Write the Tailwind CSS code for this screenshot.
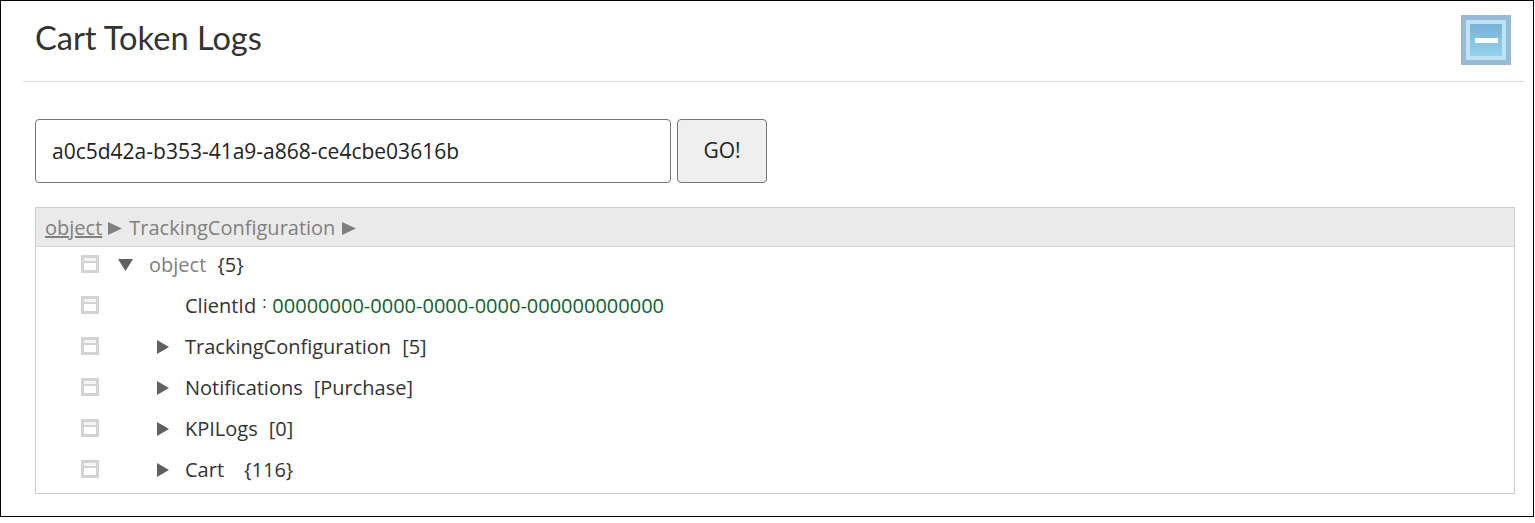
<!DOCTYPE html>
<html lang="en">
<head>
  <meta charset="UTF-8">
  <title>Cart Token Logs</title>
  <script src="https://cdn.jsdelivr.net/npm/@tailwindcss/browser@4"></script>
</head>
<body class="bg-white font-['Open_Sans',sans-serif] text-[#333]">

  <div class="w-[1534px] h-[517px] border border-black pl-[22px] pr-[9px]">

    <!-- Header -->
    <div class="h-[80px] flex items-start justify-between border-b border-[#dcdcdc] box-content">
      <h1 class="ml-[12px] mt-[15px] text-[32.6px] leading-[44px] font-['Lato',sans-serif] text-[#333]">Cart Token Logs</h1>
      <div class="mt-[14px] mr-[13px] w-[50px] h-[50px] border-[5px] border-[#98bad8] bg-[#bfe3f2] p-[4px]">
        <div class="w-full h-full bg-gradient-to-b from-[#78b2d8] to-[#92d3ec] flex items-center justify-center">
          <div class="w-[23px] h-[5px] bg-white"></div>
        </div>
      </div>
    </div>

    <div class="pl-[12px] pr-[9px]">
      <!-- Token search -->
      <div class="flex gap-[6px] mt-[37px]">
        <input type="text" value="a0c5d42a-b353-41a9-a868-ce4cbe03616b"
               class="w-[636px] h-[64px] px-[16px] border border-[#767676] rounded-[4px] text-[21px] text-[#222]">
        <button class="w-[90px] h-[64px] border border-[#767676] rounded-[4px] bg-[#efefef] text-[21px] text-[#222]">GO!</button>
      </div>

      <!-- JSON viewer -->
      <div class="mt-[24px] w-[1480px] h-[287px] border border-[#cccccc] text-[20px]">
        <div class="h-[39px] bg-[#eaeaea] border-b border-[#d4d4d4] flex items-center pl-[9px] pt-[2px] text-[#808080] whitespace-pre">
          <span class="underline">object</span>
          <svg class="ml-[6px] mr-[7px]" width="14" height="13" viewBox="0 0 14 13"><path d="M0 0V13L14 6.5Z" fill="#808080"/></svg>
          <span>TrackingConfiguration</span>
          <svg class="ml-[7px]" width="14" height="13" viewBox="0 0 14 13"><path d="M0 0V13L14 6.5Z" fill="#808080"/></svg>
        </div>

        <div class="h-[38px] pb-[2px] flex items-center pl-[45px]">
          <span class="w-[18px] h-[18px] mb-[2px] border-[3px] border-[#d3d3d3]"><span class="block h-[5px] bg-[#f4f4f4] border-b-2 border-[#d3d3d3]"></span></span>
          <span class="w-[14px] ml-[19px]"><svg width="15" height="12" viewBox="0 0 15 12"><path d="M0 0H15L7.5 12Z" fill="#606060"/></svg></span>
          <span class="ml-[17px] text-[#808080]">object</span>
          <span class="ml-[11px]">{5}</span>
        </div>

        <div class="h-[41px] flex items-center pl-[45px]">
          <span class="w-[18px] h-[18px] mb-[2px] border-[3px] border-[#d3d3d3]"><span class="block h-[5px] bg-[#f4f4f4] border-b-2 border-[#d3d3d3]"></span></span>
          <span class="ml-[86px]">ClientId</span>
          <span class="ml-[6px] mb-[8px] text-[16px]">:</span>
          <span class="ml-[6px] text-[#0f5f2f]">00000000-0000-0000-0000-000000000000</span>
        </div>

        <div class="h-[41px] flex items-center pl-[45px]">
          <span class="w-[18px] h-[18px] mb-[2px] border-[3px] border-[#d3d3d3]"><span class="block h-[5px] bg-[#f4f4f4] border-b-2 border-[#d3d3d3]"></span></span>
          <svg class="ml-[58px]" width="12" height="14" viewBox="0 0 12 14"><path d="M0 0V14L12 7Z" fill="#606060"/></svg>
          <span class="ml-[16px]">TrackingConfiguration</span>
          <span class="ml-[11px]">[5]</span>
        </div>

        <div class="h-[41px] flex items-center pl-[45px]">
          <span class="w-[18px] h-[18px] mb-[2px] border-[3px] border-[#d3d3d3]"><span class="block h-[5px] bg-[#f4f4f4] border-b-2 border-[#d3d3d3]"></span></span>
          <svg class="ml-[58px]" width="12" height="14" viewBox="0 0 12 14"><path d="M0 0V14L12 7Z" fill="#606060"/></svg>
          <span class="ml-[16px]">Notifications</span>
          <span class="ml-[11px]">[Purchase]</span>
        </div>

        <div class="h-[41px] flex items-center pl-[45px]">
          <span class="w-[18px] h-[18px] mb-[2px] border-[3px] border-[#d3d3d3]"><span class="block h-[5px] bg-[#f4f4f4] border-b-2 border-[#d3d3d3]"></span></span>
          <svg class="ml-[58px]" width="12" height="14" viewBox="0 0 12 14"><path d="M0 0V14L12 7Z" fill="#606060"/></svg>
          <span class="ml-[16px]">KPILogs</span>
          <span class="ml-[11px]">[0]</span>
        </div>

        <div class="h-[41px] flex items-center pl-[45px]">
          <span class="w-[18px] h-[18px] mb-[2px] border-[3px] border-[#d3d3d3]"><span class="block h-[5px] bg-[#f4f4f4] border-b-2 border-[#d3d3d3]"></span></span>
          <svg class="ml-[58px]" width="12" height="14" viewBox="0 0 12 14"><path d="M0 0V14L12 7Z" fill="#606060"/></svg>
          <span class="ml-[16px]">Cart</span>
          <span class="ml-[20px]">{116}</span>
        </div>
      </div>
    </div>
  </div>

</body>
</html>
